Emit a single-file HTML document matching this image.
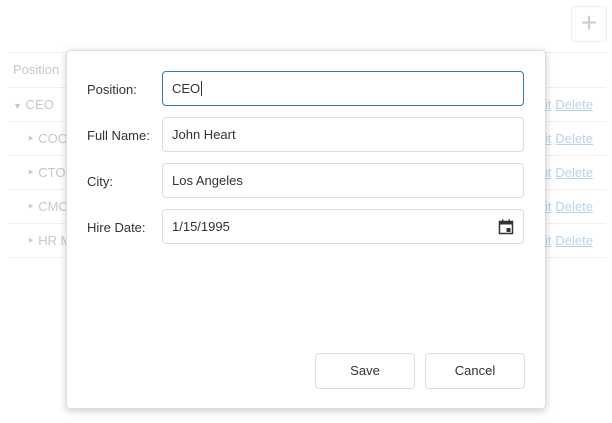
<!DOCTYPE html>
<html><head><style>
body{margin:0;width:612px;height:423px;background:#fff;font-family:"Liberation Sans",sans-serif;font-size:13px;color:#333;position:relative;overflow:hidden}
.bg{position:absolute;color:#c8c8c8}
.line{position:absolute;left:8px;right:6px;height:1px;background:#f0f0f0}
.del{position:absolute;left:529px;color:#b8d4ee}
.del u{margin-right:4px}
.dlg{position:absolute;left:66px;top:50px;width:478px;height:357px;background:#fff;border:1px solid #ddd;border-radius:4px;box-shadow:0 2px 8px rgba(0,0,0,.2)}
.lbl{position:absolute;left:20px;color:#333}
.inp{position:absolute;left:95px;width:360px;height:33px;border:1px solid #ddd;border-radius:4px;box-sizing:content-box}
.inp span{position:absolute;left:9px;top:9px}
.btn{position:absolute;top:302px;width:98px;height:34px;border:1px solid #ddd;border-radius:4px;text-align:center;line-height:34px}
</style></head><body>
<div class="bg" style="left:571px;top:6px;width:34px;height:34px;border:1px solid #eee;border-radius:4px;text-align:center;line-height:32px;font-size:28px;color:#ccc">+</div>
<div class="line" style="top:52px"></div>
<div class="bg" style="left:13px;top:62px">Position</div>
<div class="line" style="top:87px"></div>
<div class="bg" style="left:13px;top:97px"><span style="font-size:9px">▼</span> CEO</div>
<div class="line" style="top:121px"></div>
<div class="bg" style="left:27px;top:131px">‣ COO</div>
<div class="line" style="top:155px"></div>
<div class="bg" style="left:27px;top:165px">‣ CTO</div>
<div class="line" style="top:189px"></div>
<div class="bg" style="left:27px;top:199px">‣ CMO</div>
<div class="line" style="top:223px"></div>
<div class="bg" style="left:27px;top:233px">‣ HR M</div>
<div class="line" style="top:257px"></div>
<div class="del" style="top:97px"><u>Edit</u><u>Delete</u></div>
<div class="del" style="top:131px"><u>Edit</u><u>Delete</u></div>
<div class="del" style="top:165px"><u>Edit</u><u>Delete</u></div>
<div class="del" style="top:199px"><u>Edit</u><u>Delete</u></div>
<div class="del" style="top:233px"><u>Edit</u><u>Delete</u></div>
<div class="dlg">
<div class="lbl" style="top:31px">Position:</div>
<div class="inp" style="top:20px;border-color:#337ab7"><span>CEO<span style="position:static;border-right:1px solid #333;margin-left:1px"></span></span></div>
<div class="lbl" style="top:77px">Full Name:</div>
<div class="inp" style="top:66px"><span>John Heart</span></div>
<div class="lbl" style="top:123px">City:</div>
<div class="inp" style="top:112px"><span>Los Angeles</span></div>
<div class="lbl" style="top:169px">Hire Date:</div>
<div class="inp" style="top:158px"><span>1/15/1995</span>
<svg style="position:absolute;right:9px;top:9px" width="16" height="16" viewBox="0 0 16 16"><rect x="1.5" y="2.5" width="13" height="12" fill="none" stroke="#333" stroke-width="1.5"/><rect x="1.5" y="2.5" width="13" height="3" fill="#333"/><rect x="4" y="0.5" width="1.5" height="3" fill="#333"/><rect x="10.5" y="0.5" width="1.5" height="3" fill="#333"/><rect x="8.5" y="9" width="4" height="4" fill="#333"/></svg></div>
<div class="btn" style="left:248px">Save</div>
<div class="btn" style="left:358px">Cancel</div>
</div>
</body></html>
